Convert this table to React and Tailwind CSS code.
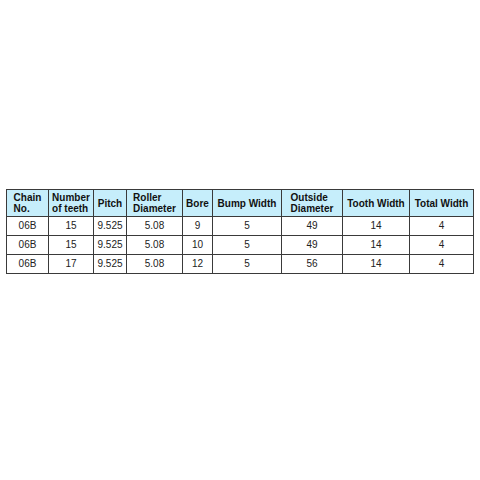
import React from "react";

const cols = [42, 45, 33, 56, 30, 69, 61, 67, 64];

const headers = [
  ["Chain", "No."],
  ["Number", "of teeth"],
  ["Pitch"],
  ["Roller", "Diameter"],
  ["Bore"],
  ["Bump Width"],
  ["Outside", "Diameter"],
  ["Tooth Width"],
  ["Total Width"],
];

const rows = [
  ["06B", "15", "9.525", "5.08", "9", "5", "49", "14", "4"],
  ["06B", "15", "9.525", "5.08", "10", "5", "49", "14", "4"],
  ["06B", "17", "9.525", "5.08", "12", "5", "56", "14", "4"],
];

export default function App() {
  return (
    <div
      className="w-[480px] h-[480px] bg-white pt-[189px] pl-[6px]"
      style={{ fontFamily: '"Liberation Sans", Arial, sans-serif' }}
    >
      <table className="table-fixed border-collapse w-[468px] border border-[#3a3a3a]">
        <colgroup>
          {cols.map((w, i) => (
            <col key={i} style={{ width: w }} />
          ))}
        </colgroup>
        <thead>
          <tr className="h-[27px] bg-[#c6eefb]">
            {headers.map((h, i) => (
              <th
                key={i}
                className="border border-[#3a3a3a] p-0 text-center align-middle font-bold text-[10px] leading-[11px] text-[#111]"
              >
                <span className="inline-block text-left">
                  {h.map((line, j) => (
                    <div key={j}>{line}</div>
                  ))}
                </span>
              </th>
            ))}
          </tr>
        </thead>
        <tbody>
          {rows.map((r, i) => (
            <tr key={i} className="h-[19px]">
              {r.map((c, j) => (
                <td
                  key={j}
                  className="border border-[#3a3a3a] p-0 text-center align-middle text-[10px] leading-[12px] text-[#222]"
                >
                  {c}
                </td>
              ))}
            </tr>
          ))}
        </tbody>
      </table>
    </div>
  );
}
